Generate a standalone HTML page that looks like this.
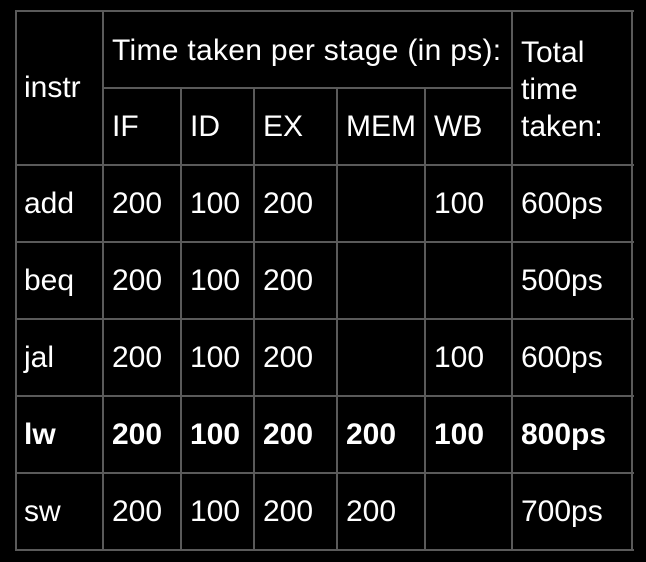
<html><head><style>
body{margin:0;background:#000;width:646px;height:562px;position:relative;overflow:hidden;font-family:"Liberation Sans",sans-serif;color:#fff;font-size:30px}
.h{position:absolute;height:2px;background:#5a5a5a}
.v{position:absolute;width:2px;background:#5a5a5a}
.t{position:absolute;line-height:32px;white-space:nowrap}
b{font-weight:bold}
</style></head><body>
<div class="h" style="left:15px;width:619px;top:10px"></div>
<div class="h" style="left:103px;width:410px;top:87px"></div>
<div class="h" style="left:15px;width:619px;top:164px"></div>
<div class="h" style="left:15px;width:619px;top:241px"></div>
<div class="h" style="left:15px;width:619px;top:318px"></div>
<div class="h" style="left:15px;width:619px;top:395px"></div>
<div class="h" style="left:15px;width:619px;top:472px"></div>
<div class="h" style="left:15px;width:619px;top:549px"></div>
<div class="v" style="left:15px;top:10px;height:541px"></div>
<div class="v" style="left:102px;top:10px;height:541px"></div>
<div class="v" style="left:180px;top:87px;height:464px"></div>
<div class="v" style="left:253px;top:87px;height:464px"></div>
<div class="v" style="left:336px;top:87px;height:464px"></div>
<div class="v" style="left:424px;top:87px;height:464px"></div>
<div class="v" style="left:511px;top:10px;height:541px"></div>
<div class="v" style="left:631px;top:10px;height:541px"></div>

<div class="t" style="left:24px;top:72px">instr</div>
<div class="t" style="left:112px;top:35px;letter-spacing:0.3px">Time taken per stage (in ps):</div>
<div class="t" style="left:521px;top:34px;line-height:37px">Total<br>time<br>taken:</div>
<div class="t" style="left:112px;top:111px">IF</div>
<div class="t" style="left:190px;top:111px">ID</div>
<div class="t" style="left:263px;top:111px">EX</div>
<div class="t" style="left:346px;top:111px">MEM</div>
<div class="t" style="left:434px;top:111px">WB</div>

<div class="t" style="left:24px;top:188px">add</div><div class="t" style="left:112px;top:188px">200</div><div class="t" style="left:190px;top:188px">100</div><div class="t" style="left:263px;top:188px">200</div><div class="t" style="left:434px;top:188px">100</div><div class="t" style="left:521px;top:188px">600ps</div>
<div class="t" style="left:24px;top:265px">beq</div><div class="t" style="left:112px;top:265px">200</div><div class="t" style="left:190px;top:265px">100</div><div class="t" style="left:263px;top:265px">200</div><div class="t" style="left:521px;top:265px">500ps</div>
<div class="t" style="left:24px;top:342px">jal</div><div class="t" style="left:112px;top:342px">200</div><div class="t" style="left:190px;top:342px">100</div><div class="t" style="left:263px;top:342px">200</div><div class="t" style="left:434px;top:342px">100</div><div class="t" style="left:521px;top:342px">600ps</div>
<div class="t" style="left:24px;top:419px"><b>lw</b></div><div class="t" style="left:112px;top:419px"><b>200</b></div><div class="t" style="left:190px;top:419px"><b>100</b></div><div class="t" style="left:263px;top:419px"><b>200</b></div><div class="t" style="left:346px;top:419px"><b>200</b></div><div class="t" style="left:434px;top:419px"><b>100</b></div><div class="t" style="left:521px;top:419px"><b>800ps</b></div>
<div class="t" style="left:24px;top:496px">sw</div><div class="t" style="left:112px;top:496px">200</div><div class="t" style="left:190px;top:496px">100</div><div class="t" style="left:263px;top:496px">200</div><div class="t" style="left:346px;top:496px">200</div><div class="t" style="left:521px;top:496px">700ps</div>
</body></html>
